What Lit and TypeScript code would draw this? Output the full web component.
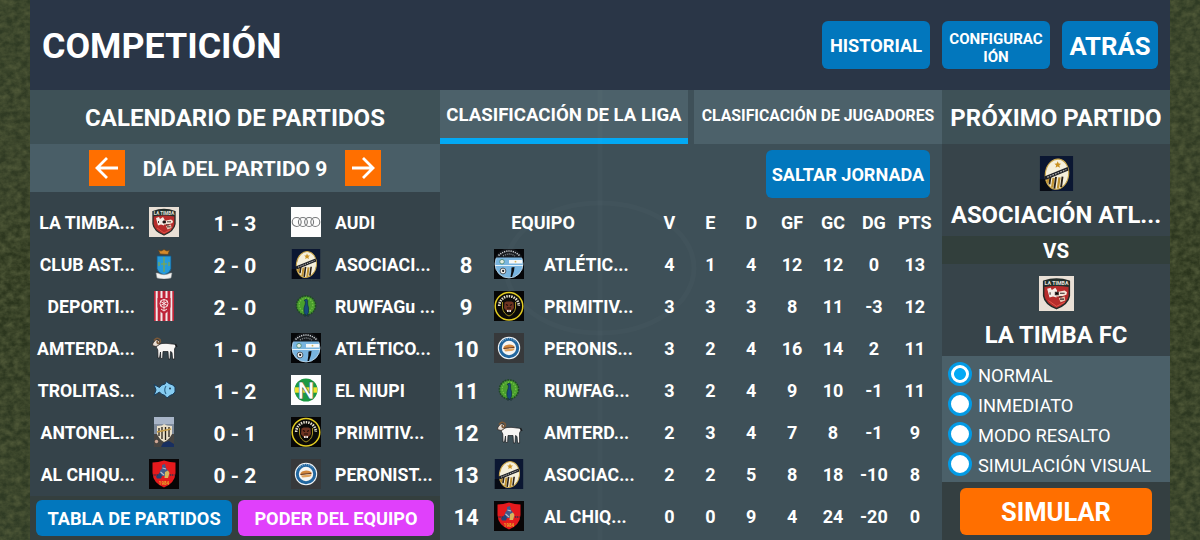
import { customElement, property, state } from "lit/decorators.js";
import { classMap } from "lit/directives/class-map.js";
import { html, svg, css, LitElement } from "lit";

interface Match {
  home: string;
  homeCrest: string;
  score: string;
  awayCrest: string;
  away: string;
}

interface Standing {
  rank: number;
  crest: string;
  name: string;
  stats: number[];
}

const MATCHES: Match[] = [
  { home: "LA TIMBA...", homeCrest: "timba", score: "1 - 3", awayCrest: "audi", away: "AUDI" },
  { home: "CLUB AST...", homeCrest: "club", score: "2 - 0", awayCrest: "asociacion", away: "ASOCIACI..." },
  { home: "DEPORTI...", homeCrest: "deportivo", score: "2 - 0", awayCrest: "peacock", away: "RUWFAGu ..." },
  { home: "AMTERDA...", homeCrest: "ram", score: "1 - 0", awayCrest: "atletico", away: "ATLÉTICO..." },
  { home: "TROLITAS...", homeCrest: "fish", score: "1 - 2", awayCrest: "niupi", away: "EL NIUPI" },
  { home: "ANTONEL...", homeCrest: "antonel", score: "0 - 1", awayCrest: "primitivo", away: "PRIMITIV..." },
  { home: "AL CHIQU...", homeCrest: "chiqui", score: "0 - 2", awayCrest: "peronista", away: "PERONIST..." },
];

const COLUMNS = ["V", "E", "D", "GF", "GC", "DG", "PTS"];

const STANDINGS: Standing[] = [
  { rank: 8, crest: "atletico", name: "ATLÉTIC...", stats: [4, 1, 4, 12, 12, 0, 13] },
  { rank: 9, crest: "primitivo", name: "PRIMITIV...", stats: [3, 3, 3, 8, 11, -3, 12] },
  { rank: 10, crest: "peronista", name: "PERONIS...", stats: [3, 2, 4, 16, 14, 2, 11] },
  { rank: 11, crest: "peacock", name: "RUWFAG...", stats: [3, 2, 4, 9, 10, -1, 11] },
  { rank: 12, crest: "ram", name: "AMTERD...", stats: [2, 3, 4, 7, 8, -1, 9] },
  { rank: 13, crest: "asociacion", name: "ASOCIAC...", stats: [2, 2, 5, 8, 18, -10, 8] },
  { rank: 14, crest: "chiqui", name: "AL CHIQ...", stats: [0, 0, 9, 4, 24, -20, 0] },
];

const MODES = ["NORMAL", "INMEDIATO", "MODO RESALTO", "SIMULACIÓN VISUAL"];

// All crests share a 30x30 view box
const CRESTS: Record<string, unknown> = {
  timba: svg`
    <rect width="30" height="30" fill="#e9e0d6" />
    <path d="M4 4.500 Q15 0.500 26 4.500 V17 Q25 24 15 28 Q5 24 4 17Z" fill="#b62c2b" stroke="#222b29" stroke-width="1.3" />
    <path d="M4.500 4.600 Q15 1 25.500 4.600 V9.500 Q15 7.500 4.500 9.500Z" fill="#20302c" />
    <text x="15" y="7.800" text-anchor="middle" font-size="4.500" font-weight="700" fill="#e6e2dc">LA TIMBA</text>
    <path d="M7 11 L10 10 L11 12 L14 10 L15.500 12.500 L15 18.500 L12 17.500 L9 18.500Z" fill="#f3ece6" />
    <path d="M14.500 14 L22 12.500 L24 14 L23.500 16 L19 17.500 L15 17.500Z" fill="#f6e5d8" />
    <path d="M17 19 L22 17.500 L22.500 21 L18.500 22.500Z" fill="#e9c8b4" />
    <path d="M14 14 H16.500 V16 H14Z M18 14.800 H22 M9.500 14 V16 M18 19.800 H21.500 M17 17.800 H20" stroke="#332525" stroke-width="0.900" />
    <path d="M8 21 L15 26 L22 22.500" fill="none" stroke="#e75b4d" stroke-width="0.800" />
  `,
  audi: svg`
    <rect width="30" height="30" fill="#fdfdfd" />
    <g fill="none" stroke="#77797b" stroke-width="1.100">
      <circle cx="5.700" cy="15" r="4.500" />
      <circle cx="11.900" cy="15" r="4.500" />
      <circle cx="18.100" cy="15" r="4.500" />
      <circle cx="24.300" cy="15" r="4.500" />
    </g>
  `,
  club: svg`
    <path d="M11 5 L9.500 1 L12 2 L15 0.500 L18 2 L20.500 1 L19 5.500Z" fill="#d48a2c" stroke="#60421d" stroke-width="0.700" />
    <path d="M8 7 H22 V20 Q21 24 15 26 Q9 24 8 20Z" fill="#269bdc" stroke="#18567e" stroke-width="0.800" />
    <path d="M15 8 V23 M12 15 H18 M10 13 V17 M20 13 V17" stroke="#8aa83a" stroke-width="1.100" />
    <path d="M7 24 Q9 23.500 11 25 Q15 26.500 19 25 Q21 23.500 23 24 L22 29 Q15 31 8 29Z" fill="#f2f2f0" stroke="#8c9294" stroke-width="0.500" />
  `,
  asociacion: svg`
    <rect x="0.800" width="28.400" height="30" fill="#0b1732" />
    <rect x="0.800" y="20" width="10" height="10" fill="#070b14" />
    <g transform="rotate(8 15 15)">
      <ellipse cx="15.500" cy="15.500" rx="10" ry="13" fill="#f5f0dc" stroke="#caa64a" stroke-width="1" />
      <path d="M8.500 18 V24 M13 19 V27.500 M18 18 V27.500" stroke="#c09231" stroke-width="2" />
      <path d="M10.300 18 V25 M15 18 V28 M20.500 17 V26" stroke="#2a2119" stroke-width="1.600" />
    </g>
    <path d="M4.500 17.500 L24.500 9.500 L25.300 12.500 L5.500 20.500Z" fill="#1d2027" />
    <path d="M7 18.200 L23.500 11.600" stroke="#b9b8b2" stroke-width="1" stroke-dasharray="1.500 0.900" />
    <path d="M16 4.500 L16.900 6.500 L19 6.600 L17.400 8 L18 10 L16 8.900 L14.200 10 L14.700 8 L13.200 6.600 L15.200 6.500Z" fill="#c99122" />
  `,
  deportivo: svg`
    <rect x="5" width="20" height="30" fill="#bf2438" />
    <path d="M7.700 0 V30 M12.500 0 V30 M17.500 0 V30 M22.300 0 V30" stroke="#f1e9ea" stroke-width="2" />
    <path d="M8.500 7 H21.500 V16 Q20 21 15 23 Q10 21 8.500 16Z" fill="#bd263a" />
    <g fill="none" stroke="#f5dfe1" stroke-width="1">
      <circle cx="15" cy="12.500" r="4" />
      <path d="M15 8 V20 M11 10 L19 15 M19 10 L11 15 M12 18 L15 20 L18 18" />
    </g>
  `,
  peacock: svg`
    <circle cx="15" cy="14.500" r="9.600" fill="#4aa02d" stroke="#1f4a25" stroke-width="1.600" stroke-dasharray="1.800 0.900" />
    <circle cx="15" cy="14" r="6.800" fill="none" stroke="#7bc24a" stroke-width="1.200" stroke-dasharray="1.200 1.600" />
    <path d="M13 9.500 L15.500 8 Q17.300 9 16.600 12 Q16.600 14 17.600 17 Q18.500 22 15.300 25 Q12 22 13 17 Q14.500 13 14.500 10.500Z" fill="#174a7c" stroke="#12303f" stroke-width="0.700" />
    <path d="M14 23 V26 M17 23 V26" stroke="#1b3136" stroke-width="0.900" />
  `,
  ram: svg`
    <path
      d="M8 12 Q11 11 13 10.500 Q18 10 23 11 Q26.500 10.500 27 13 L25.500 16 L25.600 26 H23.600 L23 19.500 L21.500 18.500 L21 26 H19.500 L19 18.500 H14 L13.600 25.500 H11.800 L11.500 19 L10.500 25 H9 L8.800 17 Q6.500 14 8 12Z"
      fill="#f7f5f3" stroke="#17191b" stroke-width="0.700"
    />
    <path d="M4 10 L7 6.500 L10.500 8 L10 12 L7 13.500 L3.500 12.500Z" fill="#e9dfd5" stroke="#2a211c" stroke-width="0.700" />
    <path d="M5 7.500 Q8 3.500 11 6.500 Q12.500 10 9 10.500 Q7.500 9.500 8.500 8" fill="none" stroke="#7a5838" stroke-width="1.600" />
    <path d="M26.500 11 L28 14" stroke="#17191b" stroke-width="1.200" />
  `,
  atletico: svg`
    <rect width="30" height="30" fill="#050608" />
    <circle cx="15" cy="15" r="14" fill="#78b4df" stroke="#c5dcea" stroke-width="0.800" />
    <path d="M1.500 8.500 A14.500 14.500 0 0 1 28.500 8.500Z" fill="#15181c" />
    <path d="M4.500 6.500 Q15 -2.500 25.500 6.500" fill="none" stroke="#c9cdd0" stroke-width="1.600" stroke-dasharray="1.200 1" />
    <path d="M9 7 Q15 3 21 7" fill="none" stroke="#8a9094" stroke-width="1.300" stroke-dasharray="1 1" />
    <path d="M1 16.500 H29" stroke="#e5f2f8" stroke-width="1" />
    <rect x="15" y="11" width="13" height="3.500" fill="#f6f8f8" />
    <circle cx="21.500" cy="12.700" r="0.900" fill="#d8b65a" />
    <circle cx="8" cy="12.700" r="2.300" fill="#e5ece0" stroke="#4b8b78" stroke-width="0.900" />
    <circle cx="9" cy="22" r="2.900" fill="#f3f5f5" stroke="#1c2024" stroke-width="0.700" />
    <path d="M8 21.500 L9 20.500 L10.300 21.500 L9.800 23 L8.500 23Z" fill="#16191c" />
    <path d="M17.500 18.500 L20.500 18 L20 22 L19 25 L18 28 H16.500 L17.300 23Z" fill="#0b0d10" />
  `,
  fish: svg`
    <path
      d="M5 9.500 L10.500 12.500 Q12 9.500 16 9 L17.500 6.500 L20 8.500 Q24 9.500 26 12 V17 Q24 20 21 20.500 L18 23 L16 20.500 Q12 19.500 10.500 17 L5 20.500 L7 15Z"
      fill="#86cdf2" stroke="#163c5c" stroke-width="1"
    />
    <path d="M17 11 Q14.500 15 17 19" fill="none" stroke="#28648b" stroke-width="1.100" />
    <circle cx="21" cy="13.500" r="0.900" fill="#16324a" />
  `,
  niupi: svg`
    <rect width="30" height="30" fill="#fdfdfd" />
    <circle cx="15" cy="15" r="11.500" fill="#1b9a43" />
    <path d="M3.900 12.300 H26.100 V17.700 H3.900Z" fill="#f1e32b" />
    <text x="15" y="23.500" text-anchor="middle" font-size="24" font-weight="700" fill="#fdfdfd" stroke="#1c5130" stroke-width="0.500">N</text>
  `,
  antonel: svg`
    <rect x="5" width="20" height="30" fill="#7e8b9c" />
    <rect x="5" width="20" height="7" fill="#a8b5c8" />
    <path d="M5 17 H25 V30 H5Z" fill="#464441" />
    <path d="M8 9 L13 8.500 L15 7 L18 8.500 L23 9 V17 Q20 23 15 25 Q10 22 8 17Z" fill="#e9dfc8" />
    <path d="M10 11 V19 M13 10 V22 M16.500 10 V23 M20 10 V20" stroke="#252019" stroke-width="1.300" />
    <path d="M8 15 L22 12" stroke="#c39b47" stroke-width="1.700" />
    <path d="M14 26 L20 24 L25 27 V30 H12Z" fill="#182f60" />
    <circle cx="7.500" cy="24.500" r="1.700" fill="#cfa694" />
  `,
  primitivo: svg`
    <rect width="30" height="30" fill="#060606" />
    <circle cx="15" cy="15.300" r="13.800" fill="#0b0a08" stroke="#e2cc22" stroke-width="1.500" />
    <path d="M5.200 15 A9.800 9.800 0 0 1 24.800 15" fill="none" stroke="#e4dfce" stroke-width="2.600" stroke-dasharray="1.500 1" />
    <path d="M8.500 11 V17 Q9.500 23 15 25 Q20.500 23 21.500 17 V11" fill="none" stroke="#b29e26" stroke-width="0.900" />
    <path d="M10.500 11.500 L12.500 10.500 H17.500 L19.500 11.500 L20 17 L17.500 20 H12.500 L10 17Z" fill="#6f3422" />
    <path d="M12 13.500 L14 14.500 M18 13.500 L16 14.500 M13 17 H17" stroke="#1b0c08" stroke-width="1.200" />
    <path d="M13 19 H17 V21 H13Z" fill="#eee4dc" />
    <path d="M15 19 V21" stroke="#49352c" stroke-width="0.700" />
  `,
  chiqui: svg`
    <rect width="30" height="30" fill="#080506" />
    <path d="M3.500 3.500 Q9 3.500 15 1.500 Q21 3.500 26.500 3.500 V14 Q26 24 15 28.500 Q4 24 3.500 14Z" fill="#e51a1d" />
    <path d="M13 6 L16 5 L17 9 L20 13 L19.500 17 H10 L11 12 L13 9Z" fill="#435a8b" />
    <path d="M7 17.500 L11 13.500 L13 17 L12 19.500 H8Z" fill="#244377" />
    <path d="M13.500 9 L17 10 M11.500 13 L15 16" stroke="#b8c0c8" stroke-width="1.100" />
    <path d="M16 13 L19 11.500 L20.500 14 L19 19 H15.500Z" fill="#d8b65d" />
    <path d="M4.500 16 H9 M21 16 H25.500" stroke="#32344c" stroke-width="1.500" stroke-dasharray="1.200 0.600" />
    <text x="15" y="25.500" text-anchor="middle" font-size="4.500" font-weight="700" fill="#e8b02a">1984</text>
  `,
  peronista: svg`
    <rect width="30" height="30" fill="#37393b" />
    <circle cx="15" cy="15" r="11.200" fill="#f3f6f8" />
    <circle cx="15" cy="15" r="8.700" fill="#f5f5f3" stroke="#22679f" stroke-width="3" />
    <path d="M8 9 A8.900 8.900 0 0 1 22 9" fill="none" stroke="#a9c6dd" stroke-width="0.900" stroke-dasharray="1 1" />
    <path d="M9.500 14.500 Q10 12 15 11.500 Q20 11.500 20.500 14 L9.500 16Z" fill="#d2873d" />
    <path d="M9.500 15.500 L20.500 14.300" stroke="#6b3c21" stroke-width="1.200" />
    <path d="M9.700 16.500 L20.500 15.300 Q20.500 18 17 18 L11.500 18.500Z" fill="#e0a25b" />
  `,
};

@customElement("team-crest")
export class TeamCrest extends LitElement {
  @property()
  name: string = "";

  static styles = [
    css`
      :host {
        display: block;
        width: 30px;
        height: 30px;
        flex: none;
      }

      svg {
        display: block;
        width: 100%;
        height: 100%;
      }
    `,
  ];

  render() {
    return html`<svg viewBox="0 0 30 30">${CRESTS[this.name]}</svg>`;
  }
}

@customElement("app-root")
export class AppRoot extends LitElement {
  @state()
  private _mode: string = "NORMAL";

  @state()
  private _day: number = 9;

  static styles = [
    css`
      * {
        box-sizing: border-box;
      }

      :host {
        display: block;
        position: relative;
        width: 1200px;
        height: 540px;
        overflow: hidden;
        background-color: #2a3820;
        color: #ffffff;
        font-family: Roboto, "Liberation Sans", sans-serif;
        font-weight: 700;
        line-height: 1;
        white-space: nowrap;
      }

      .pitch,
      .lines {
        position: absolute;
        inset: 0;
        width: 1200px;
        height: 540px;
        pointer-events: none;
      }

      .screen {
        position: relative;
        display: grid;
        grid-template-rows: 90px 450px;
        width: 1140px;
        height: 540px;
        margin: 0 auto;
      }

      .top {
        display: flex;
        align-items: center;
        justify-content: space-between;
        padding: 0 12px;
        background-color: #2a3647;
      }

      .top-title {
        padding-top: 4px;
        font-size: 35.8px;
      }

      .top-actions {
        display: flex;
        gap: 12px;
      }

      .button {
        display: flex;
        align-items: center;
        justify-content: center;
        height: 48px;
        padding-top: 2px;
        border-radius: 6px;
        background-color: #0277bd;
        text-align: center;
      }

      .history {
        width: 108px;
        font-size: 18.2px;
      }

      .config {
        width: 108px;
        padding-top: 5px;
        font-size: 15.1px;
        line-height: 18px;
      }

      .back {
        width: 96px;
        padding-top: 4px;
        font-size: 25.7px;
      }

      .columns {
        display: grid;
        grid-template-columns: 410px 502px 228px;
      }

      .panel-title {
        display: flex;
        align-items: center;
        justify-content: center;
        height: 54px;
        padding-top: 2px;
        background-color: #3e5157;
        font-size: 24px;
      }

      .calendar {
        display: flex;
        flex-direction: column;
        background-color: #35434a;
      }

      .day {
        display: flex;
        align-items: center;
        justify-content: space-between;
        height: 48px;
        padding: 0 59px;
        background-color: #495e67;
        font-size: 21px;
      }

      .day-label {
        padding-top: 2px;
      }

      .arrow {
        width: 36px;
        height: 36px;
        background-color: #ff6f00;
      }

      .matches {
        flex: 1;
        padding-top: 9px;
      }

      .match {
        display: flex;
        align-items: center;
        height: 42px;
        font-size: 17.7px;
      }

      .home {
        flex: none;
        width: 105px;
        margin-right: 14px;
        padding-top: 3px;
        text-align: right;
      }

      .score {
        flex: none;
        width: 112px;
        padding-top: 4px;
        font-size: 21px;
        text-align: center;
      }

      .away {
        padding-top: 3px;
        margin-left: 14px;
      }

      .calendar-actions {
        display: flex;
        gap: 6px;
        height: 45px;
        padding: 4px 6px 5px;
        background-color: #343f3e;
      }

      .calendar-actions .button {
        flex: 1;
        height: 36px;
        font-size: 18.2px;
      }

      .calendar-actions .power {
        background-color: #e040fb;
      }

      .league {
        background-color: #3e5058;
      }

      .tabs {
        display: grid;
        grid-template-columns: 1fr 1fr;
        gap: 6px;
        height: 54px;
      }

      .tab {
        display: flex;
        align-items: center;
        justify-content: center;
        padding-bottom: 3px;
        background-color: #4c616a;
        font-size: 15.8px;
      }

      .tab.active {
        padding: 3px 0 0;
        border-bottom: 6px solid #03a9f4;
        font-size: 18.6px;
      }

      .skip-row {
        display: flex;
        justify-content: flex-end;
        padding: 6px 12px 3px;
      }

      .skip {
        width: 164px;
        font-size: 18.1px;
      }

      .row {
        display: grid;
        grid-template-columns: 54px 30px 125px repeat(7, 40.9px);
        align-items: center;
        height: 42px;
        font-size: 18px;
        text-align: center;
      }

      .row div {
        padding-top: 2px;
      }

      .row .team-head {
        grid-column: 1 / 4;
        padding-right: 3px;
      }

      .row .rank {
        padding: 3px 2px 0 0;
        font-size: 22px;
      }

      .row .team {
        padding: 3px 0 0 20px;
        font-size: 17.7px;
        text-align: left;
      }

      .next {
        display: flex;
        flex-direction: column;
        background-color: #37444a;
      }

      .opponent {
        display: flex;
        flex-direction: column;
        align-items: center;
        gap: 13px;
        height: 92px;
        padding-top: 12px;
        font-size: 23.8px;
      }

      .opponent team-crest {
        width: 35px;
        height: 35px;
      }

      .versus {
        display: flex;
        align-items: center;
        justify-content: center;
        height: 28px;
        padding-top: 2px;
        background-color: #323f3c;
        font-size: 20.5px;
      }

      .modes {
        height: 126px;
        padding: 3px 6px;
        background-color: #4b6069;
      }

      .mode {
        display: flex;
        align-items: center;
        gap: 6px;
        height: 30px;
        font-size: 18.25px;
        font-weight: 400;
      }

      .mode-label {
        padding-top: 4px;
      }

      .radio {
        width: 24px;
        height: 24px;
        border: 3px solid #039be5;
        border-radius: 50%;
        background-color: #ffffff;
      }

      .radio.on {
        background: radial-gradient(circle, #03a9f4 5.5px, #ffffff 6.3px);
      }

      .simulate-row {
        flex: 1;
        padding: 6px 18px;
        background-color: #343f41;
      }

      .simulate-row .button {
        height: 47px;
        padding-top: 3px;
        background-color: #ff6f00;
        font-size: 25.5px;
      }
    `,
  ];

  render() {
    return html`
      <svg class="pitch" viewBox="0 0 1200 540">
        <defs>
          <filter id="grass" x="0" y="0" width="100%" height="100%">
            <feTurbulence type="fractalNoise" baseFrequency="0.14 0.17" numOctaves="3" seed="8" />
            <feColorMatrix values="0 0 0 0 0.08  0 0 0 0 0.1  0 0 0 0 0.04  1.6 0 0 0 -0.4" />
          </filter>
          <linearGradient id="shade" x1="0" y1="0" x2="0" y2="1">
            <stop offset="0" stop-color="#2f3b24" />
            <stop offset="0.35" stop-color="#303a23" />
            <stop offset="0.5" stop-color="#2a341c" />
            <stop offset="1" stop-color="#2f3b25" />
          </linearGradient>
        </defs>
        <rect width="1200" height="540" fill="url(#shade)" />
        <rect width="1200" height="540" filter="url(#grass)" />
      </svg>

      <div class="screen">
        <header class="top">
          <div class="top-title">COMPETICIÓN</div>
          <div class="top-actions">
            <div class="button history">HISTORIAL</div>
            <div class="button config">CONFIGURAC<br />IÓN</div>
            <div class="button back">ATRÁS</div>
          </div>
        </header>
        <main class="columns">${this._renderCalendar()} ${this._renderLeague()} ${this._renderNext()}</main>
      </div>

      <svg class="lines" viewBox="0 0 1200 540" fill="none" stroke="#ffffff" stroke-opacity="0.018" stroke-width="5">
        <ellipse cx="600" cy="268" rx="94" ry="65" />
        <path d="M600 90 V540" />
      </svg>
    `;
  }

  private _renderCalendar() {
    return html`
      <section class="calendar">
        <div class="panel-title">CALENDARIO DE PARTIDOS</div>
        <div class="day">
          ${this._renderArrow("M29 18 H8 M18 8 L8 18 L18 28", -1)}
          <div class="day-label">DÍA DEL PARTIDO ${this._day}</div>
          ${this._renderArrow("M7 18 H28 M18 8 L28 18 L18 28", 1)}
        </div>
        <div class="matches">
          ${MATCHES.map(
            (m) => html`
              <div class="match">
                <div class="home">${m.home}</div>
                <team-crest .name=${m.homeCrest}></team-crest>
                <div class="score">${m.score}</div>
                <team-crest .name=${m.awayCrest}></team-crest>
                <div class="away">${m.away}</div>
              </div>
            `
          )}
        </div>
        <div class="calendar-actions">
          <div class="button">TABLA DE PARTIDOS</div>
          <div class="button power">PODER DEL EQUIPO</div>
        </div>
      </section>
    `;
  }

  private _renderArrow(path: string, step: number) {
    return html`
      <svg class="arrow" viewBox="0 0 36 36" @click="${() => (this._day += step)}">
        <path d="${path}" fill="none" stroke="#ffffff" stroke-width="2.8" />
      </svg>
    `;
  }

  private _renderLeague() {
    return html`
      <section class="league">
        <div class="tabs">
          <div class="tab active">CLASIFICACIÓN DE LA LIGA</div>
          <div class="tab">CLASIFICACIÓN DE JUGADORES</div>
        </div>
        <div class="skip-row">
          <div class="button skip">SALTAR JORNADA</div>
        </div>
        <div class="row">
          <div class="team-head">EQUIPO</div>
          ${COLUMNS.map((c) => html`<div>${c}</div>`)}
        </div>
        ${STANDINGS.map(
          (s) => html`
            <div class="row">
              <div class="rank">${s.rank}</div>
              <team-crest .name=${s.crest}></team-crest>
              <div class="team">${s.name}</div>
              ${s.stats.map((n) => html`<div>${n}</div>`)}
            </div>
          `
        )}
      </section>
    `;
  }

  private _renderNext() {
    return html`
      <section class="next">
        <div class="panel-title">PRÓXIMO PARTIDO</div>
        <div class="opponent">
          <team-crest name="asociacion"></team-crest>
          <div>ASOCIACIÓN ATL...</div>
        </div>
        <div class="versus">VS</div>
        <div class="opponent">
          <team-crest name="timba"></team-crest>
          <div>LA TIMBA FC</div>
        </div>
        <div class="modes">
          ${MODES.map(
            (m) => html`
              <div class="mode" @click="${() => (this._mode = m)}">
                <div class=${classMap({ radio: true, on: this._mode === m })}></div>
                <div class="mode-label">${m}</div>
              </div>
            `
          )}
        </div>
        <div class="simulate-row">
          <div class="button">SIMULAR</div>
        </div>
      </section>
    `;
  }
}

declare global {
  interface HTMLElementTagNameMap {
    "team-crest": TeamCrest;
    "app-root": AppRoot;
  }
}
